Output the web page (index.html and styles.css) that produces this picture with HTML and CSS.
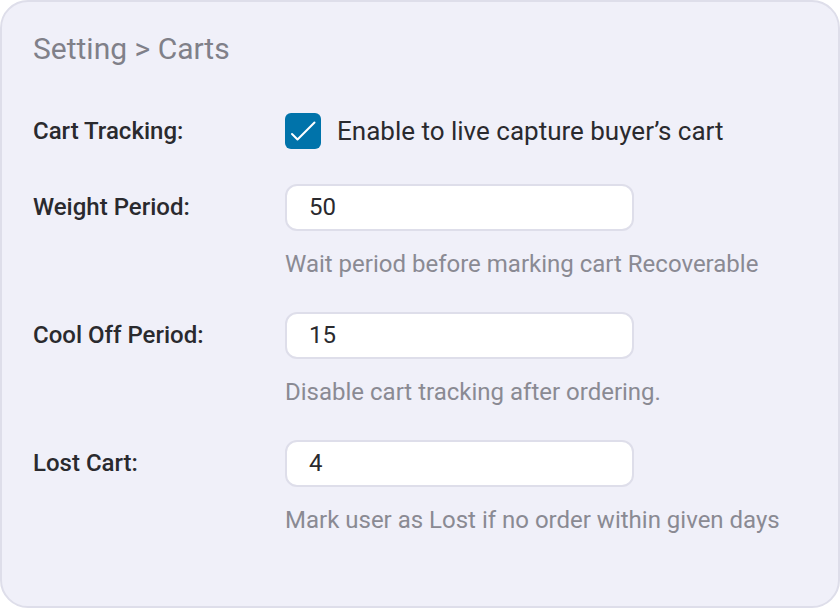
FILE: index.html
```html
<!DOCTYPE html>
<html>
<head>
<meta charset="utf-8">
<link rel="stylesheet" href="styles.css">
</head>
<body>
<div class="card">
  <h1 class="title">Setting &gt; Carts</h1>
  <div class="row row-check">
    <div class="label">Cart Tracking:</div>
    <label class="check">
      <span class="box">
        <svg width="36" height="36" viewBox="0 0 36 36"><path d="M7 21 L12.5 26.5 L29.5 9.5" fill="none" stroke="#fff" stroke-width="2" stroke-linecap="round" stroke-linejoin="round"/></svg>
      </span>
      <span class="check-text">Enable to live capture buyer’s cart</span>
    </label>
  </div>
  <div class="row">
    <div class="label">Weight Period:</div>
    <div class="field">
      <div class="input">50</div>
      <div class="help">Wait period before marking cart Recoverable</div>
    </div>
  </div>
  <div class="row">
    <div class="label">Cool Off Period:</div>
    <div class="field">
      <div class="input">15</div>
      <div class="help">Disable cart tracking after ordering.</div>
    </div>
  </div>
  <div class="row">
    <div class="label">Lost Cart:</div>
    <div class="field">
      <div class="input">4</div>
      <div class="help">Mark user as Lost if no order within given days</div>
    </div>
  </div>
</div>
</body>
</html>
```
FILE: styles.css
```css
html, body { margin: 0; padding: 0; background: #fff; }
body { font-family: Roboto, "Liberation Sans", sans-serif; }
.card {
  box-sizing: border-box;
  width: 840px;
  height: 608px;
  background: #f0f0f9;
  border: 2px solid #dedeea;
  border-radius: 28px;
  padding: 30px 31px 0 31px;
}
.title {
  margin: 0;
  font-size: 30px;
  font-weight: 400;
  color: #808089;
  line-height: 34px;
}
.row {
  display: flex;
  align-items: flex-start;
}
.row-check { margin-top: 47px; align-items: center; }
.label {
  width: 252px;
  font-size: 24px;
  font-weight: 500;
  color: #2a2a2e;
  line-height: 46px;
}
.row-check .label { line-height: 36px; }
.check { display: flex; align-items: center; }
.box {
  width: 36px; height: 36px;
  border-radius: 6px;
  background: #0073aa;
  display: flex; align-items: center; justify-content: center;
}
.check-text {
  margin-left: 16px;
  font-size: 26px;
  color: #2a2a2e;
}
.row-check + .row { margin-top: 35px; }
.field { display: flex; flex-direction: column; }
.input {
  box-sizing: border-box;
  width: 349px; height: 47px;
  background: #fff;
  border: 2px solid #dedeea;
  border-radius: 12px;
  padding: 0 22px;
  font-size: 24px;
  color: #2a2a2e;
  line-height: 43px;
}
.help {
  margin-top: 20px;
  font-size: 24px;
  color: #8a8a93;
  line-height: 26px;
  margin-bottom: 35px;
}
```
